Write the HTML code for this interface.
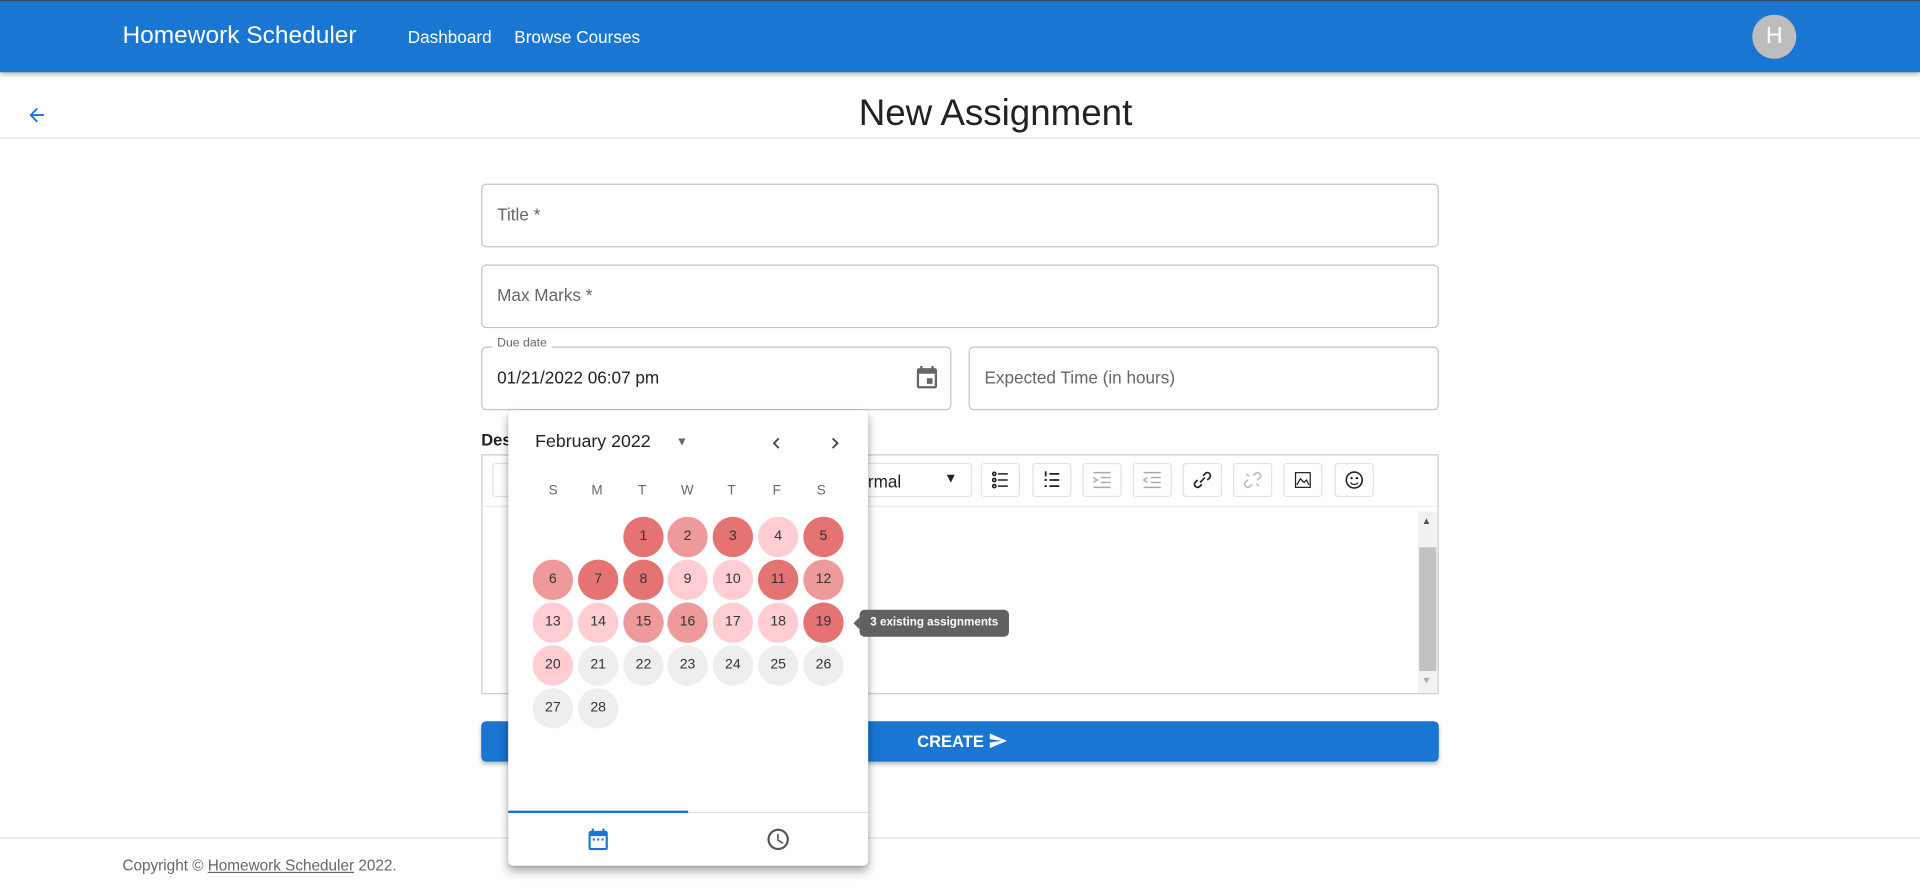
<!DOCTYPE html>
<html><head><meta charset="utf-8"><style>
html,body{margin:0;padding:0;width:1920px;height:891px;overflow:hidden;background:#fff}
#w{position:absolute;left:0;top:0;width:1568px;height:727px;transform:scale(1.22449);transform-origin:0 0;font-family:"Liberation Sans",Arial,sans-serif;color:#222}
.a{position:absolute}
.hdr{left:0;top:0;width:1568px;height:59px;background:#1976d2;border-top:1px solid #3a4a5c;box-sizing:border-box;box-shadow:0 2px 4px rgba(0,0,0,.3)}
.fld{border:1px solid #c4c4c4;border-radius:4px;box-sizing:border-box;background:#fff}
.ph{font-size:14px;color:#666}
.c{position:absolute;width:33px;height:33px;border-radius:50%;text-align:center;line-height:33px;font-size:11.5px;color:#333}
.d{background:#e57373}.m{background:#ef9a9a}.l{background:#ffcdd2}.g{background:#eee}
.tb{position:absolute;top:378px;width:32px;height:28px;border:1px solid #e3e3e3;border-radius:3px;box-sizing:border-box;background:#fff}
</style></head><body><div id="w">
<div class="a hdr"></div>
<div class="a" style="left:100px;top:18px;font-size:20px;color:#fff">Homework Scheduler</div>
<div class="a" style="left:333px;top:22px;font-size:14px;color:#fff">Dashboard</div>
<div class="a" style="left:420px;top:22px;font-size:14px;color:#fff">Browse Courses</div>
<div class="a" style="left:1431px;top:12px;width:36px;height:36px;border-radius:50%;background:#bdbdbd;color:#fff;text-align:center;line-height:36px;font-size:19px">H</div>
<svg class="a" style="left:21px;top:85px" width="18" height="18" viewBox="0 0 24 24"><path d="M20 11H7.83l5.59-5.59L12 4l-8 8 8 8 1.41-1.41L7.83 13H20v-2z" fill="#1976d2"/></svg>
<div class="a" style="left:0;width:1626px;text-align:center;top:76px;font-size:30px;color:#222">New Assignment</div>
<div class="a" style="left:0;top:112px;width:1568px;height:1px;background:#e0e0e0"></div>

<div class="a fld" style="left:393px;top:150px;width:782px;height:52px"><span class="a ph" style="left:12px;top:16px">Title *</span></div>
<div class="a fld" style="left:393px;top:216px;width:782px;height:52px"><span class="a ph" style="left:12px;top:16px">Max Marks *</span></div>
<div class="a fld" style="left:393px;top:283px;width:384px;height:52px"><span class="a" style="left:12px;top:16px;font-size:14px;color:#222">01/21/2022 06:07 pm</span>
<svg class="a" style="left:352px;top:13px" width="22" height="22" viewBox="0 0 24 24"><path d="M19 4h-1V2h-2v2H8V2H6v2H5c-1.1 0-2 .9-2 2v14c0 1.1.9 2 2 2h14c1.1 0 2-.9 2-2V6c0-1.1-.9-2-2-2zm0 16H5V9h14v11zM12 13h5v5h-5z" fill="#666"/></svg></div>
<div class="a" style="left:402px;top:275px;font-size:10px;color:#666;background:#fff;padding:0 4px">Due date</div>
<div class="a fld" style="left:791px;top:283px;width:384px;height:52px"><span class="a ph" style="left:12px;top:16px">Expected Time (in hours)</span></div>

<div class="a" style="left:393px;top:352px;font-size:13.5px;font-weight:bold">Description</div>
<div class="a" style="left:393px;top:371px;width:782px;height:196px;border:1px solid #ccc;box-sizing:border-box"></div>
<div class="a" style="left:394px;top:413px;width:780px;height:1px;background:#eee"></div>
<div class="tb" style="left:402px"></div>
<div class="a" style="left:690px;top:378px;width:104px;height:28px;border:1px solid #e3e3e3;border-radius:3px;box-sizing:border-box"><span class="a" style="left:10px;top:6px;font-size:14px">ormal</span><span class="a" style="left:80px;top:6px;font-size:11px">▼</span></div>
<div class="tb" style="left:801px"><svg width="30" height="26" viewBox="0 0 30 26"><g stroke="#222" stroke-width="1.3" fill="none"><circle cx="10" cy="8" r="1.3"/><circle cx="10" cy="13" r="1.3"/><circle cx="10" cy="18" r="1.3"/><path d="M13 8h8M13 13h8M13 18h8"/></g></svg></div>
<div class="tb" style="left:843px"><svg width="30" height="26" viewBox="0 0 30 26"><path d="M13 8h8M13 13h8M13 18h8M10 6v4M9 13h2M9 18h2" stroke="#222" stroke-width="1.5"/></svg></div>
<div class="tb" style="left:884px"><svg width="30" height="26" viewBox="0 0 30 26"><path d="M8 7h14M14 11h8M14 15h8M8 19h14M8 11l3 2-3 2" stroke="#aaa" stroke-width="1.2" fill="none"/></svg></div>
<div class="tb" style="left:925px"><svg width="30" height="26" viewBox="0 0 30 26"><path d="M8 7h14M14 11h8M14 15h8M8 19h14M11 11l-3 2 3 2" stroke="#aaa" stroke-width="1.2" fill="none"/></svg></div>
<div class="tb" style="left:966px"><svg width="30" height="26" viewBox="0 0 30 26"><path d="M13 15l4-4M11 13l-2 2a2.5 2.5 0 003.5 3.5l2-2M19 13l2-2a2.5 2.5 0 00-3.5-3.5l-2 2" stroke="#222" stroke-width="1.4" fill="none"/></svg></div>
<div class="tb" style="left:1007px"><svg width="30" height="26" viewBox="0 0 30 26"><path d="M11 13l-2 2a2.5 2.5 0 003.5 3.5l2-2M19 13l2-2a2.5 2.5 0 00-3.5-3.5l-2 2M10 8l2 2M20 18l-2-2" stroke="#bbb" stroke-width="1.3" fill="none"/></svg></div>
<div class="tb" style="left:1048px"><svg width="30" height="26" viewBox="0 0 30 26"><rect x="9" y="7" width="12" height="12" stroke="#222" fill="none"/><path d="M10 17l3-5 3 3 2-2 2 4" stroke="#222" fill="none"/></svg></div>
<div class="tb" style="left:1090px"><svg width="30" height="26" viewBox="0 0 30 26"><circle cx="15" cy="13" r="6.5" stroke="#222" stroke-width="1.3" fill="none"/><circle cx="12.8" cy="11.5" r=".9"/><circle cx="17.2" cy="11.5" r=".9"/><path d="M12 15a3.5 3.5 0 006 0" stroke="#222" fill="none"/></svg></div>
<div class="a" style="left:1158px;top:418px;width:16px;height:148px;background:#f1f1f1"></div>
<div class="a" style="left:1159px;top:447px;width:14px;height:101px;background:#c1c1c1"></div>
<div class="a" style="left:1161px;top:421px;font-size:8px;color:#555">▲</div>
<div class="a" style="left:1161px;top:551px;font-size:8px;color:#aaa">▼</div>

<div class="a" style="left:393px;top:589px;width:782px;height:33px;background:#1976d2;border-radius:4px;box-shadow:0 2px 3px rgba(0,0,0,.25)"></div>
<div class="a" style="left:749px;top:598px;font-size:13.5px;font-weight:bold;color:#fff">CREATE</div>
<svg class="a" style="left:806px;top:597px" width="18" height="16" viewBox="0 0 24 24"><path d="M2.01 21L23 12 2.01 3 2 10l15 2-15 2z" fill="#fff"/></svg>

<div class="a" style="left:0;top:684px;width:1568px;height:1px;background:#e0e0e0"></div>
<div class="a" style="left:100px;top:700px;font-size:12.5px;color:#666">Copyright © <u>Homework Scheduler</u> 2022.</div>

<div class="a" style="left:415px;top:335px;width:294px;height:372px;background:#fff;border-radius:4px;box-shadow:0 5px 8px rgba(0,0,0,.3),0 1px 3px rgba(0,0,0,.15)">
<div class="a" style="left:22px;top:18px;font-size:14.5px;color:#222">February&nbsp;2022</div>
<div class="a" style="left:137px;top:21px;font-size:10px;color:#666">▼</div>
<svg class="a" style="left:210px;top:18px" width="18" height="18" viewBox="0 0 24 24"><path d="M15.4 7.4L14 6l-6 6 6 6 1.4-1.4L10.8 12z" fill="#444"/></svg>
<svg class="a" style="left:258px;top:18px" width="18" height="18" viewBox="0 0 24 24"><path d="M10 6L8.6 7.4 13.2 12l-4.6 4.6L10 18l6-6z" fill="#444"/></svg>
<div class="a" style="left:21px;top:60px;font-size:11px;color:#666">
<span class="a" style="left:12px">S</span><span class="a" style="left:47px">M</span><span class="a" style="left:85px">T</span><span class="a" style="left:120px">W</span><span class="a" style="left:158px">T</span><span class="a" style="left:195px">F</span><span class="a" style="left:231px">S</span></div>
<div class="c d" style="left:94px;top:87px">1</div><div class="c m" style="left:130px;top:87px">2</div><div class="c d" style="left:167px;top:87px">3</div><div class="c l" style="left:204px;top:87px">4</div><div class="c d" style="left:241px;top:87px">5</div>
<div class="c m" style="left:20px;top:122px">6</div><div class="c d" style="left:57px;top:122px">7</div><div class="c d" style="left:94px;top:122px">8</div><div class="c l" style="left:130px;top:122px">9</div><div class="c l" style="left:167px;top:122px">10</div><div class="c d" style="left:204px;top:122px">11</div><div class="c m" style="left:241px;top:122px">12</div>
<div class="c l" style="left:20px;top:157px">13</div><div class="c l" style="left:57px;top:157px">14</div><div class="c m" style="left:94px;top:157px">15</div><div class="c m" style="left:130px;top:157px">16</div><div class="c l" style="left:167px;top:157px">17</div><div class="c l" style="left:204px;top:157px">18</div><div class="c d" style="left:241px;top:157px">19</div>
<div class="c l" style="left:20px;top:192px">20</div><div class="c g" style="left:57px;top:192px">21</div><div class="c g" style="left:94px;top:192px">22</div><div class="c g" style="left:130px;top:192px">23</div><div class="c g" style="left:167px;top:192px">24</div><div class="c g" style="left:204px;top:192px">25</div><div class="c g" style="left:241px;top:192px">26</div>
<div class="c g" style="left:20px;top:227px">27</div><div class="c g" style="left:57px;top:227px">28</div>
<div class="a" style="left:0;top:328px;width:294px;height:1px;background:#e0e0e0"></div>
<div class="a" style="left:0;top:327px;width:147px;height:2px;background:#1976d2"></div>
<svg class="a" style="left:63px;top:340px" width="21" height="21" viewBox="0 0 24 24"><path d="M19 4h-1V2h-2v2H8V2H6v2H5c-1.1 0-2 .9-2 2v14c0 1.1.9 2 2 2h14c1.1 0 2-.9 2-2V6c0-1.1-.9-2-2-2zm0 16H5V9h14v11zM7 11h2v2H7zm4 0h2v2h-2zm4 0h2v2h-2z" fill="#1976d2"/></svg>
<svg class="a" style="left:210px;top:340px" width="21" height="21" viewBox="0 0 24 24"><path d="M12 2a10 10 0 100 20 10 10 0 000-20zm0 18a8 8 0 110-16 8 8 0 010 16zm.5-13H11v6l5.2 3.2.8-1.3-4.5-2.7z" fill="#555"/></svg>
</div>
<div class="a" style="left:702px;top:498px;width:122px;height:22px;background:#616161;border-radius:4px;color:#fff;font-size:9.5px;font-weight:bold;line-height:22px;text-align:center">3 existing assignments</div>
<div class="a" style="left:697px;top:504px;width:0;height:0;border-top:5px solid transparent;border-bottom:5px solid transparent;border-right:5px solid #616161"></div>
</div></body></html>
